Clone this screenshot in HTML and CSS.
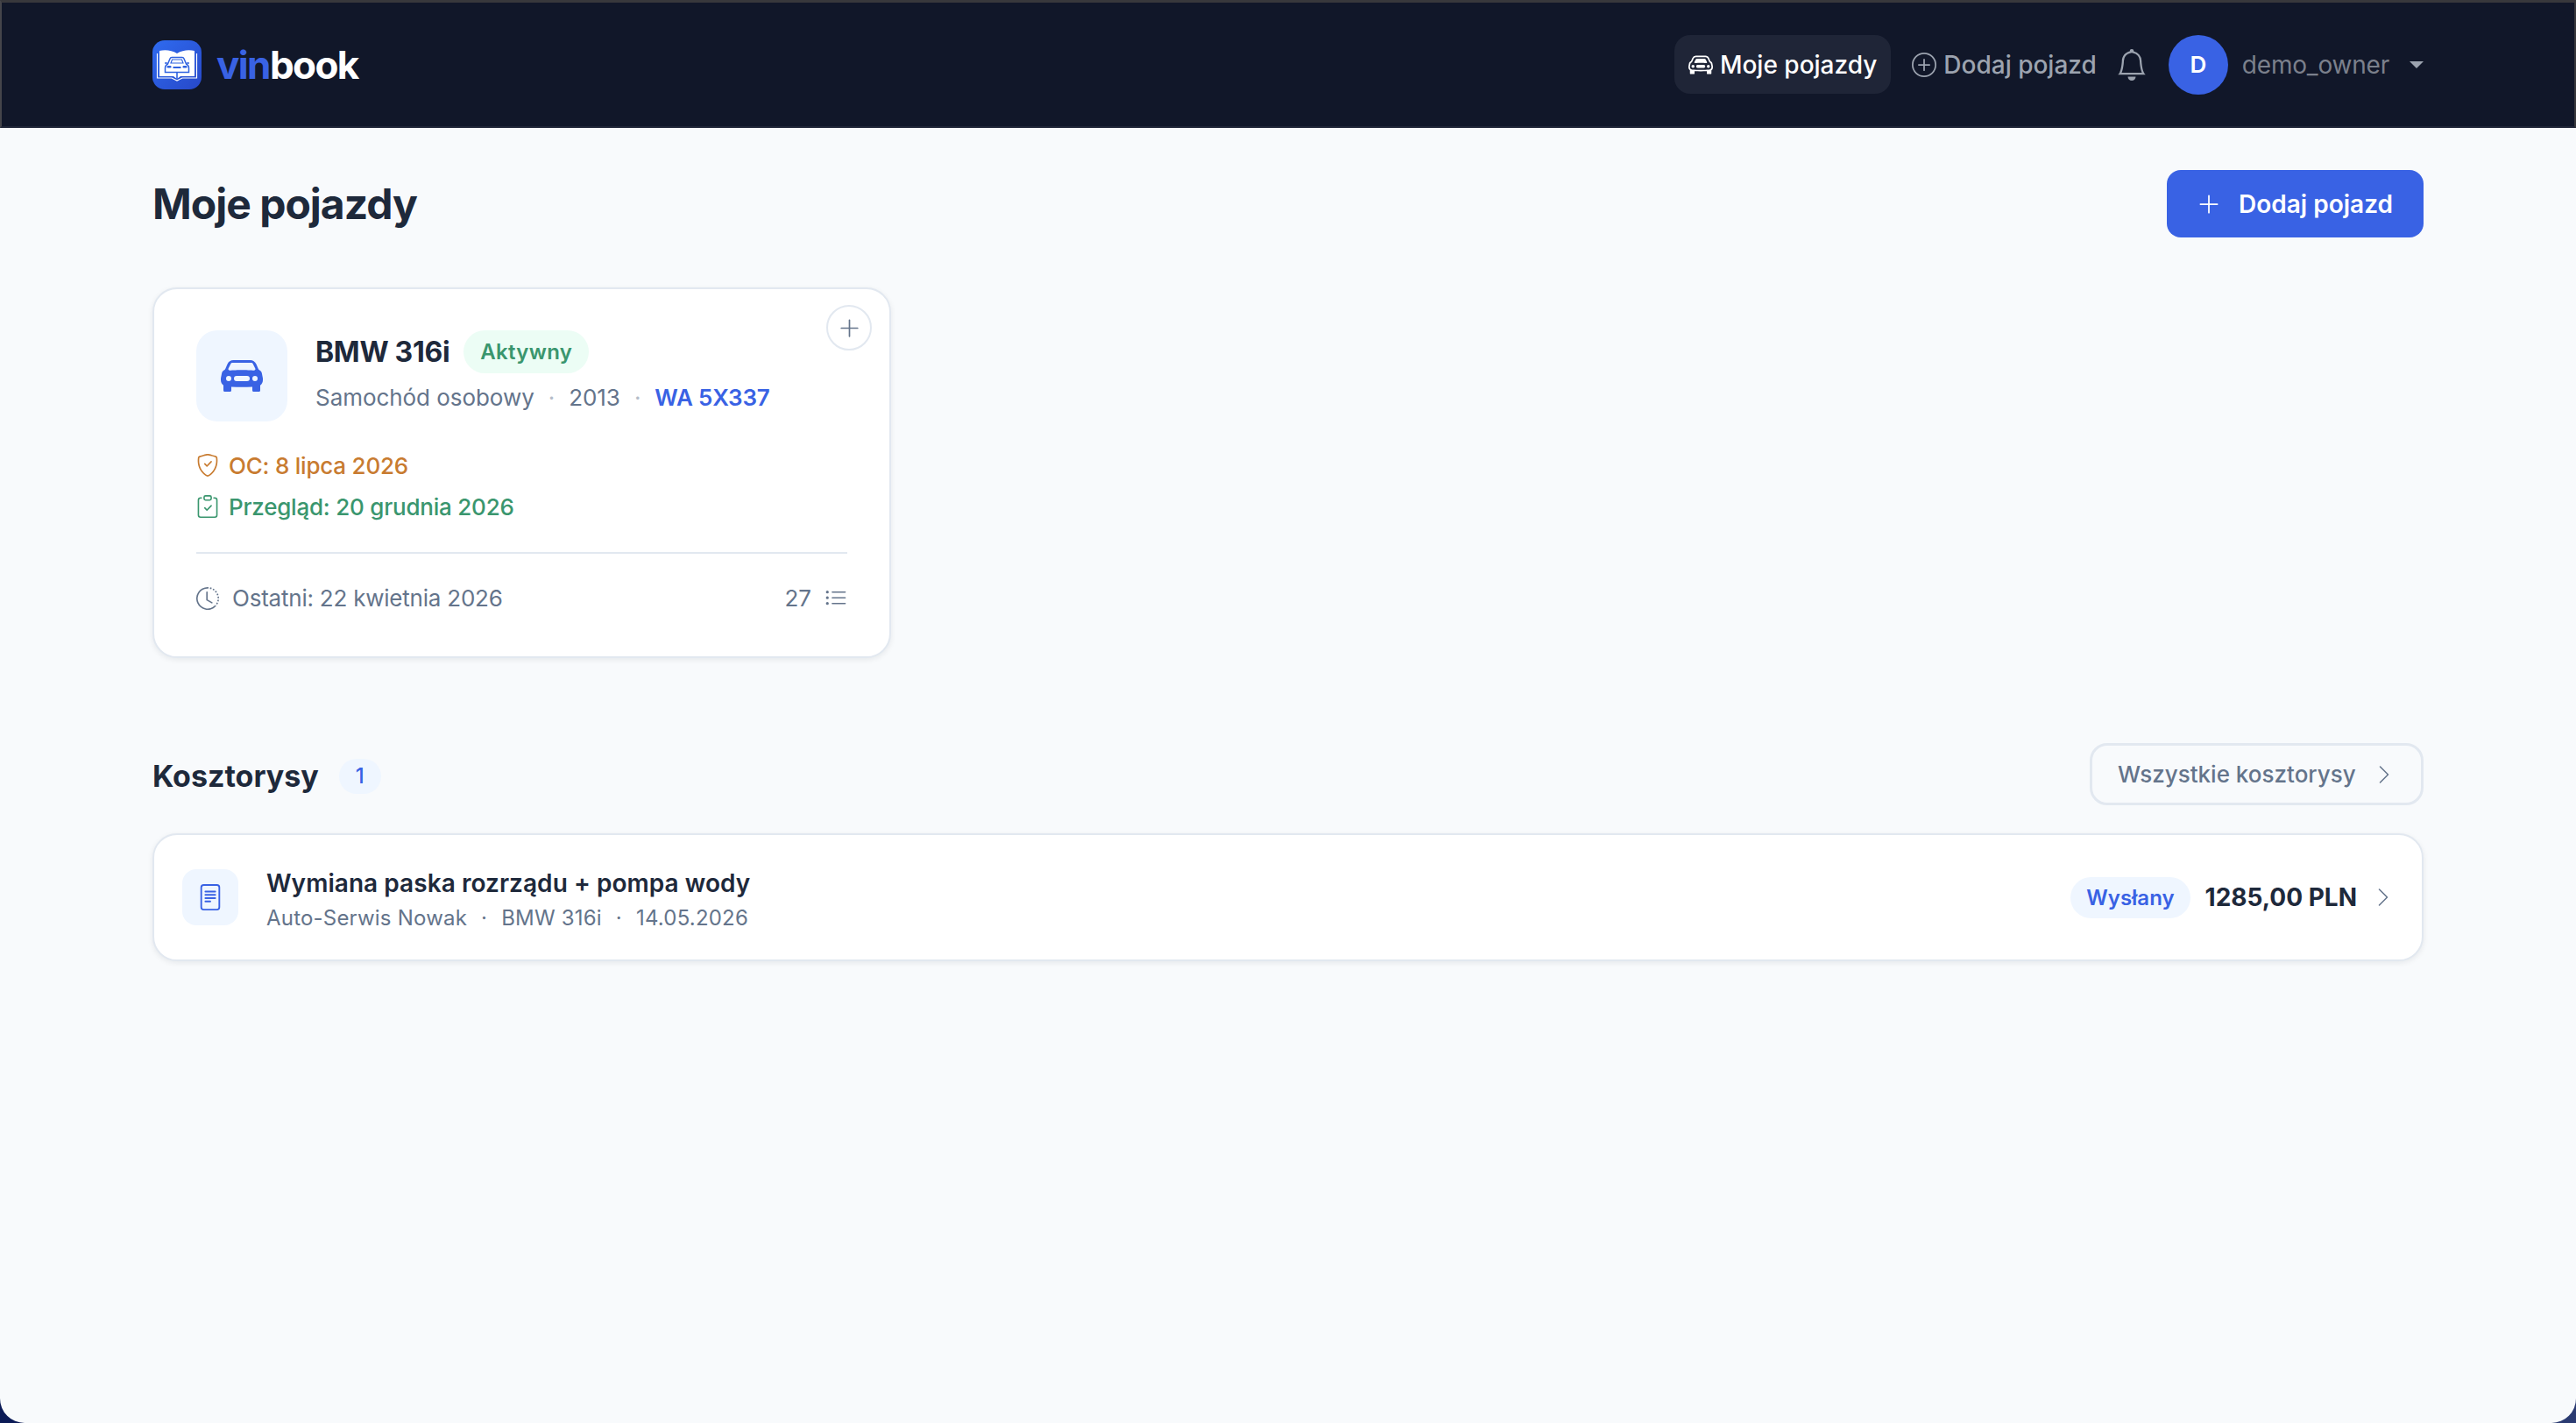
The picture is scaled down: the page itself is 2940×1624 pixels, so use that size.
FILE: index.html
```html
<!DOCTYPE html>
<html lang="pl">
<head>
    <meta charset="UTF-8">
    <title>vinbook - Moje pojazdy</title>
    <link rel="stylesheet" href="styles.css">
</head>
<body>

<div class="window">
    <header class="topbar">
        <a class="brand">
            <span class="brand-logo">
                <svg viewBox="0 0 56 56" width="56" height="56">
                    <path d="M8 12c6-1.500 14-1 20 3 6-4 14-4.500 20-3v29H32l-4 3-4-3H8z" fill="#fff"/>
                    <path d="M5.500 15v28H22l6 3 6-3h16.500V15" fill="none" stroke="#fff" stroke-width="1.200"/>
                    <path d="M28 36v8" stroke="#2f62e0" stroke-width="1.600"/>
                    <path d="M20 21c.4-1 1-1.500 2-1.500h12c1 0 1.600.5 2 1.500l2.500 6c2 1 3 2.500 3 4.500v5H14.500v-5c0-2 1-3.500 3-4.500z" fill="#fff" stroke="#2f62e0" stroke-width="1.500"/>
                    <path d="M21 26l1.500-4h11l1.500 4z" fill="none" stroke="#2f62e0" stroke-width="1.200"/>
                    <path d="M17 26h-3M39 26h3" stroke="#2f62e0" stroke-width="1.600"/>
                    <rect x="16.500" y="29" width="5" height="2.500" rx="1.200" fill="#2f62e0"/>
                    <rect x="34.500" y="29" width="5" height="2.500" rx="1.200" fill="#2f62e0"/>
                    <rect x="23.500" y="30" width="9" height="2" fill="#2f62e0"/>
                </svg>
            </span>
            <span class="brand-name"><span class="brand-vin">vin</span>book</span>
        </a>
        <nav class="topnav">
            <a class="nav-link active">
                <svg class="nav-icon" viewBox="0 0 16 16" fill="currentColor"><path d="M4 9a1 1 0 1 1-2 0 1 1 0 0 1 2 0m10 0a1 1 0 1 1-2 0 1 1 0 0 1 2 0M6 8a1 1 0 0 0 0 2h4a1 1 0 1 0 0-2zM4.862 4.276 3.906 6.190a.51.51 0 0 0 .497.731c.91-.073 2.350-.17 3.597-.17s2.688.097 3.597.17a.51.51 0 0 0 .497-.731l-.956-1.913A.5.5 0 0 0 10.691 4H5.309a.5.5 0 0 0-.447.276"/><path d="M2.520 3.515A2.500 2.500 0 0 1 4.820 2h6.362c1 0 1.904.596 2.298 1.515l.792 1.848c.075.175.21.319.38.404.5.25.855.715.965 1.262l.335 1.679q.05.242.049.49v.413c0 .814-.39 1.543-1 1.997V13.500a.5.5 0 0 1-.5.5h-2a.5.5 0 0 1-.5-.5v-1.338c-1.292.048-2.745.088-4 .088s-2.708-.04-4-.088V13.500a.5.5 0 0 1-.5.5h-2a.5.5 0 0 1-.5-.5v-1.892c-.61-.454-1-1.183-1-1.997v-.413a2.500 2.500 0 0 1 .049-.49l.335-1.680c.11-.546.465-1.012.964-1.261a.8.8 0 0 0 .381-.404l.792-1.848ZM4.820 3a1.500 1.500 0 0 0-1.379.91l-.792 1.847a1.800 1.800 0 0 1-.853.904.8.8 0 0 0-.43.564L1.030 8.910a1.500 1.500 0 0 0-.03.294v.413c0 .796.620 1.448 1.408 1.484 1.555.07 3.786.155 5.592.155s4.037-.084 5.592-.155A1.480 1.480 0 0 0 15 9.611v-.413q0-.148-.030-.294l-.335-1.680a.8.8 0 0 0-.430-.563 1.810 1.810 0 0 1-.853-.904l-.792-1.848A1.500 1.500 0 0 0 11.180 3z"/></svg>
                Moje pojazdy
            </a>
            <a class="nav-link">
                <svg class="nav-icon" viewBox="0 0 16 16" fill="currentColor"><path d="M8 15A7 7 0 1 1 8 1a7 7 0 0 1 0 14m0 1A8 8 0 1 0 8 0a8 8 0 0 0 0 16"/><path d="M8 4a.5.5 0 0 1 .5.5v3h3a.5.5 0 0 1 0 1h-3v3a.5.5 0 0 1-1 0v-3h-3a.5.5 0 0 1 0-1h3v-3A.5.5 0 0 1 8 4"/></svg>
                Dodaj pojazd
            </a>
            <svg class="bell" viewBox="0 0 16 16" fill="currentColor"><path d="M8 16a2 2 0 0 0 2-2H6a2 2 0 0 0 2 2M8 1.918l-.797.161A4 4 0 0 0 4 6c0 .628-.134 2.197-.459 3.742-.16.767-.376 1.566-.663 2.258h10.244c-.287-.692-.502-1.490-.663-2.258C12.134 8.197 12 6.628 12 6a4 4 0 0 0-3.203-3.920zM14.220 12c.223.447.481.801.78 1H1c.299-.199.557-.553.78-1C2.680 10.200 3 6.880 3 6c0-2.420 1.720-4.440 4.005-4.901a1 1 0 1 1 1.990 0A5 5 0 0 1 13 6c0 .88.32 4.200 1.220 6"/></svg>
            <span class="avatar">D</span>
            <span class="username">demo_owner</span>
            <span class="caret"></span>
        </nav>
    </header>

    <main class="content">
        <div class="page-head">
            <h1>Moje pojazdy</h1>
            <a class="btn-primary">
                <svg class="btn-plus" viewBox="0 0 16 16" fill="currentColor"><path fill-rule="evenodd" d="M8 2a.5.5 0 0 1 .5.5v5h5a.5.5 0 0 1 0 1h-5v5a.5.5 0 0 1-1 0v-5h-5a.5.5 0 0 1 0-1h5v-5A.5.5 0 0 1 8 2"/></svg>
                Dodaj pojazd
            </a>
        </div>

        <div class="vehicle-grid">
            <article class="vehicle-card">
                <button class="quick-add">
                    <svg viewBox="0 0 16 16" width="27" height="27" fill="currentColor"><path fill-rule="evenodd" d="M8 2a.5.5 0 0 1 .5.5v5h5a.5.5 0 0 1 0 1h-5v5a.5.5 0 0 1-1 0v-5h-5a.5.5 0 0 1 0-1h5v-5A.5.5 0 0 1 8 2"/></svg>
                </button>
                <div class="vehicle-head">
                    <div class="vehicle-icon">
                        <svg viewBox="0 0 16 16" width="48" height="48" fill="#3962e4"><path d="M2.520 3.515A2.500 2.500 0 0 1 4.820 2h6.362c1 0 1.904.596 2.298 1.515l.792 1.848c.075.175.21.319.38.404.5.25.855.715.965 1.262l.335 1.679q.05.242.049.49v.413c0 .814-.39 1.543-1 1.997V13.500a.5.5 0 0 1-.5.5h-2a.5.5 0 0 1-.5-.5v-1.338c-1.292.048-2.745.088-4 .088s-2.708-.04-4-.088V13.500a.5.5 0 0 1-.5.5h-2a.5.5 0 0 1-.5-.5v-1.892c-.61-.454-1-1.183-1-1.997v-.413a2.500 2.500 0 0 1 .049-.49l.335-1.680c.11-.546.465-1.012.964-1.261a.8.8 0 0 0 .381-.404l.792-1.848ZM3 10a1 1 0 1 0 0-2 1 1 0 0 0 0 2m10 0a1 1 0 1 0 0-2 1 1 0 0 0 0 2M6 8a1 1 0 0 0 0 2h4a1 1 0 1 0 0-2zM2.906 5.189a.51.51 0 0 0 .497.731c.91-.073 3.350-.17 4.597-.17s3.688.097 4.597.17a.51.510 0 0 0 .497-.731l-.956-1.913A.5.5 0 0 0 11.691 3H4.309a.5.5 0 0 0-.447.276L2.906 5.190Z"/></svg>
                    </div>
                    <div class="vehicle-info">
                        <div class="vehicle-title">
                            <span class="vehicle-name">BMW 316i</span>
                            <span class="badge badge-green">Aktywny</span>
                        </div>
                        <div class="vehicle-meta">
                            <span>Samochód osobowy</span>
                            <span class="dot">·</span>
                            <span>2013</span>
                            <span class="dot">·</span>
                            <span class="plate">WA 5X337</span>
                        </div>
                    </div>
                </div>

                <div class="vehicle-dates">
                    <div class="date-row orange">
                        <svg viewBox="0 0 16 16" width="26" height="26" fill="currentColor"><path d="M5.338 1.590a61 61 0 0 0-2.837.856.48.48 0 0 0-.328.39c-.554 4.157.726 7.190 2.253 9.188a10.700 10.700 0 0 0 2.287 2.233c.346.244.652.42.893.533q.18.085.293.118a1 1 0 0 0 .101.025 1 1 0 0 0 .1-.025q.114-.034.294-.118c.24-.113.547-.29.893-.533a10.700 10.700 0 0 0 2.287-2.233c1.527-1.997 2.807-5.031 2.253-9.188a.48.48 0 0 0-.328-.39c-.651-.213-1.750-.56-2.837-.855C9.552 1.290 8.531 1.067 8 1.067c-.53 0-1.552.223-2.662.524zM5.072.56C6.157.265 7.310 0 8 0s1.843.265 2.928.56c1.110.3 2.229.655 2.887.87a1.540 1.540 0 0 1 1.044 1.262c.596 4.477-.787 7.795-2.465 9.990a11.800 11.800 0 0 1-2.517 2.453 7 7 0 0 1-1.048.625c-.28.132-.581.24-.829.24s-.548-.108-.829-.24a7 7 0 0 1-1.048-.625 11.800 11.800 0 0 1-2.517-2.453C1.928 10.487.545 7.169 1.141 2.692A1.540 1.540 0 0 1 2.185 1.430 63 63 0 0 1 5.072.56"/><path d="M10.854 5.146a.5.5 0 0 1 0 .708l-3 3a.5.5 0 0 1-.708 0l-1.500-1.500a.5.5 0 1 1 .708-.708L7.500 7.793l2.646-2.647a.5.5 0 0 1 .708 0"/></svg>
                        OC: 8 lipca 2026
                    </div>
                    <div class="date-row green">
                        <svg viewBox="0 0 16 16" width="26" height="26" fill="currentColor"><path fill-rule="evenodd" d="M10.854 7.146a.5.5 0 0 1 0 .708l-3 3a.5.5 0 0 1-.708 0l-1.500-1.500a.5.5 0 1 1 .708-.708L7.500 9.793l2.646-2.647a.5.5 0 0 1 .708 0"/><path d="M4 1.500H3a2 2 0 0 0-2 2V14a2 2 0 0 0 2 2h10a2 2 0 0 0 2-2V3.500a2 2 0 0 0-2-2h-1v1h1a1 1 0 0 1 1 1V14a1 1 0 0 1-1 1H3a1 1 0 0 1-1-1V3.500a1 1 0 0 1 1-1h1z"/><path d="M9.500 1a.5.5 0 0 1 .5.5v1a.5.5 0 0 1-.5.5h-3a.5.5 0 0 1-.5-.5v-1a.5.5 0 0 1 .5-.5zm-3-1A1.500 1.500 0 0 0 5 1.500v1A1.500 1.500 0 0 0 6.500 4h3A1.500 1.500 0 0 0 11 2.500v-1A1.500 1.500 0 0 0 9.500 0z"/></svg>
                        Przegląd: 20 grudnia 2026
                    </div>
                </div>

                <div class="vehicle-foot">
                    <div class="last-entry">
                        <svg viewBox="0 0 16 16" width="26" height="26" fill="currentColor"><path d="M8.515 1.019A7 7 0 0 0 8 1V0a8 8 0 0 1 .589.022zm2.004.45a7 7 0 0 0-.985-.299l.219-.976q.576.129 1.126.342zm1.370.71a7 7 0 0 0-.439-.27l.493-.87a8 8 0 0 1 .979.654l-.615.789a7 7 0 0 0-.418-.302zm1.834 1.790a7 7 0 0 0-.653-.796l.724-.69q.406.429.747.91zm.744 1.352a7 7 0 0 0-.214-.468l.893-.45a8 8 0 0 1 .45 1.088l-.95.313a7 7 0 0 0-.179-.483m.53 2.507a7 7 0 0 0-.1-1.025l.985-.17q.1.58.116 1.170zm-.131 1.538q.05-.254.081-.51l.993.123a8 8 0 0 1-.23 1.155l-.964-.267q.069-.247.12-.501m-.952 2.379q.276-.436.486-.908l.914.405q-.24.54-.555 1.038zm-.964 1.205q.183-.183.35-.378l.758.653a8 8 0 0 1-.401.432z"/><path d="M8 1a7 7 0 1 0 4.950 11.950l.707.707A8.001 8.001 0 1 1 8 0z"/><path d="M7.500 3a.5.5 0 0 1 .5.5v5.210l3.248 1.856a.5.5 0 0 1-.496.868l-3.500-2A.5.5 0 0 1 7 9V3.500a.5.5 0 0 1 .5-.5"/></svg>
                        Ostatni: 22 kwietnia 2026
                    </div>
                    <div class="entry-count">
                        27
                        <svg viewBox="0 0 16 16" width="26" height="26" fill="currentColor"><path fill-rule="evenodd" d="M5 11.500a.5.5 0 0 1 .5-.5h9a.5.5 0 0 1 0 1h-9a.5.5 0 0 1-.5-.5m0-4a.5.5 0 0 1 .5-.5h9a.5.5 0 0 1 0 1h-9a.5.5 0 0 1-.5-.5m0-4a.5.5 0 0 1 .5-.5h9a.5.5 0 0 1 0 1h-9a.5.5 0 0 1-.5-.5m-3 1a1 1 0 1 0 0-2 1 1 0 0 0 0 2m0 4a1 1 0 1 0 0-2 1 1 0 0 0 0 2m0 4a1 1 0 1 0 0-2 1 1 0 0 0 0 2"/></svg>
                    </div>
                </div>
            </article>
        </div>

        <section class="estimates">
            <div class="section-head">
                <div class="section-title">
                    <h2>Kosztorysy</h2>
                    <span class="count">1</span>
                </div>
                <a class="btn-outline">
                    Wszystkie kosztorysy
                    <svg class="chevron" viewBox="0 0 16 16" fill="currentColor"><path fill-rule="evenodd" d="M4.646 1.646a.5.5 0 0 1 .708 0l6 6a.5.5 0 0 1 0 .708l-6 6a.5.5 0 0 1-.708-.708L10.293 8 4.646 2.354a.5.5 0 0 1 0-.708"/></svg>
                </a>
            </div>

            <div class="estimate-row">
                <div class="estimate-icon">
                    <svg viewBox="0 0 16 16" width="30" height="30" fill="#3962e4"><path d="M5 4a.5.5 0 0 0 0 1h6a.5.5 0 0 0 0-1zm-.5 2.500A.5.5 0 0 1 5 6h6a.5.5 0 0 1 0 1H5a.5.5 0 0 1-.5-.5M5 8a.5.5 0 0 0 0 1h6a.5.5 0 0 0 0-1zm0 2a.5.5 0 0 0 0 1h3a.5.5 0 0 0 0-1z"/><path d="M2 2a2 2 0 0 1 2-2h8a2 2 0 0 1 2 2v12a2 2 0 0 1-2 2H4a2 2 0 0 1-2-2zm10-1H4a1 1 0 0 0-1 1v12a1 1 0 0 0 1 1h8a1 1 0 0 0 1-1V2a1 1 0 0 0-1-1"/></svg>
                </div>
                <div class="estimate-info">
                    <div class="estimate-title">Wymiana paska rozrządu + pompa wody</div>
                    <div class="estimate-meta">
                        <span>Auto-Serwis Nowak</span>
                        <span>·</span>
                        <span>BMW 316i</span>
                        <span>·</span>
                        <span>14.05.2026</span>
                    </div>
                </div>
                <span class="badge badge-blue">Wysłany</span>
                <span class="estimate-price">1285,00 PLN</span>
                <svg class="chevron" viewBox="0 0 16 16" fill="currentColor"><path fill-rule="evenodd" d="M4.646 1.646a.5.5 0 0 1 .708 0l6 6a.5.5 0 0 1 0 .708l-6 6a.5.5 0 0 1-.708-.708L10.293 8 4.646 2.354a.5.5 0 0 1 0-.708"/></svg>
            </div>
        </section>
    </main>
</div>

</body>
</html>
```

FILE: styles.css
```css
* {
    box-sizing: border-box;
}
html, body {
    margin: 0;
    height: 100%;
}
body {
    background: linear-gradient(to right, #0b1a56, #2b3b72);
    font-family: Inter, "Noto Sans", sans-serif;
    color: #1e293b;
}
.window {
    height: 100%;
    background-color: #f8fafc;
    border-radius: 0 0 28px 28px;
    overflow: hidden;
}
.topbar {
    height: 146px;
    background-color: #111729;
    border-top: 3px solid #38383c;
    border-left: 2px solid #45454a;
    border-right: 2px solid #38383c;
    border-bottom: 2px solid #1f2537;
    padding: 0 172px;
    display: flex;
    align-items: center;
    justify-content: space-between;
}
.brand {
    display: flex;
    align-items: center;
    gap: 17px;
}
.brand-logo {
    width: 56px;
    height: 56px;
    border-radius: 14px;
    background: linear-gradient(135deg, #2f6bf0, #2748c8);
    display: block;
}
.brand-logo svg {
    display: block;
}
.brand-name {
    font-size: 44px;
    font-weight: 700;
    letter-spacing: -1.6px;
    color: #fff;
}
.brand-vin {
    color: #3962e4;
}
.topnav {
    display: flex;
    align-items: center;
}
.nav-link {
    height: 67px;
    padding: 0 16px;
    border-radius: 18px;
    display: flex;
    align-items: center;
    gap: 8px;
    font-size: 28px;
    font-weight: 500;
    color: #9ca3af;
}
.nav-link.active {
    background-color: #1f2537;
    color: #fff;
    margin-right: 8px;
}
.nav-icon {
    width: 28px;
    height: 28px;
}
.bell {
    width: 36px;
    height: 36px;
    color: #9ca3af;
    margin: 0 24px 0 6px;
}
.avatar {
    width: 68px;
    height: 68px;
    border-radius: 50%;
    background-color: #3962e4;
    color: #fff;
    font-size: 26px;
    font-weight: 600;
    display: flex;
    align-items: center;
    justify-content: center;
}
.username {
    margin-left: 16px;
    font-size: 28px;
    letter-spacing: -0.2px;
    color: #7b808c;
}
.caret {
    margin-left: 23px;
    border-top: 8px solid #9ca3af;
    border-left: 8.500px solid transparent;
    border-right: 8.500px solid transparent;
}
.content {
    padding: 48px 174px;
}
.page-head {
    display: flex;
    align-items: center;
    justify-content: space-between;
    margin-bottom: 57px;
}
h1 {
    margin: 0;
    font-size: 48px;
    font-weight: 700;
    letter-spacing: -1px;
    color: #1e293b;
}
.btn-primary {
    height: 77px;
    width: 293px;
    padding-left: 34px;
    border-radius: 16px;
    background-color: #3962e4;
    color: #fff;
    font-size: 28px;
    font-weight: 600;
    display: flex;
    align-items: center;
    gap: 20px;
}
.btn-plus {
    width: 28px;
    height: 28px;
}
.vehicle-grid {
    display: grid;
    grid-template-columns: 843px;
}
.vehicle-card {
    position: relative;
    height: 423px;
    padding: 47px 48px;
    background-color: #fff;
    border: 2px solid #e2e8f0;
    border-radius: 28px;
    box-shadow: 0 2px 6px rgba(15, 23, 42, 0.08);
}
.quick-add {
    position: absolute;
    top: 18px;
    right: 20px;
    width: 52px;
    height: 52px;
    padding: 0;
    border: 2px solid #e2e8f0;
    border-radius: 50%;
    background-color: #fff;
    color: #64748b;
    display: flex;
    align-items: center;
    justify-content: center;
}
.vehicle-head {
    display: flex;
    gap: 32px;
}
.vehicle-icon {
    width: 104px;
    height: 104px;
    border-radius: 24px;
    background-color: #eff6ff;
    display: flex;
    align-items: center;
    justify-content: center;
}
.vehicle-title {
    display: flex;
    align-items: center;
    gap: 16px;
}
.vehicle-name {
    font-size: 32px;
    font-weight: 700;
    letter-spacing: -0.3px;
}
.badge {
    border-radius: 999px;
    font-weight: 600;
    display: flex;
    align-items: center;
}
.badge-green {
    height: 49px;
    padding: 0 19px;
    background-color: #ecfdf5;
    color: #3a966e;
    font-size: 24px;
    letter-spacing: 0.3px;
}
.badge-blue {
    height: 47px;
    padding: 0 18px;
    background-color: #eff6ff;
    color: #3962e4;
    font-size: 24px;
}
.vehicle-meta {
    margin-top: 10px;
    line-height: 36px;
    display: flex;
    align-items: center;
    gap: 16px;
    font-size: 26px;
    letter-spacing: -0.05px;
    color: #64748b;
}
.dot {
    color: #b4bcc8;
}
.plate {
    font-weight: 600;
    letter-spacing: -0.2px;
    color: #3962e4;
}
.vehicle-dates {
    margin-top: 33px;
    display: flex;
    flex-direction: column;
    gap: 13px;
}
.date-row {
    height: 34px;
    display: flex;
    align-items: center;
    gap: 11px;
    font-size: 26px;
    font-weight: 500;
    letter-spacing: -0.22px;
}
.orange {
    color: #c87b30;
}
.green {
    color: #3a966e;
}
.vehicle-foot {
    margin-top: 35px;
    padding-top: 35px;
    line-height: 32px;
    border-top: 2px solid #e2e8f0;
    display: flex;
    align-items: center;
    justify-content: space-between;
    font-size: 26px;
    color: #64748b;
}
.last-entry, .entry-count {
    display: flex;
    align-items: center;
    gap: 15px;
}
.last-entry {
    letter-spacing: -0.22px;
}
.section-head {
    margin-top: 97px;
    display: flex;
    align-items: center;
    justify-content: space-between;
}
.section-title {
    padding-top: 4px;
    display: flex;
    align-items: center;
    gap: 23px;
}
h2 {
    margin: 0;
    font-size: 34px;
    font-weight: 700;
    color: #1e293b;
}
.count {
    width: 48px;
    height: 40px;
    border-radius: 20px;
    background-color: #eff6ff;
    color: #3962e4;
    font-size: 24px;
    font-weight: 500;
    display: flex;
    align-items: center;
    justify-content: center;
}
.btn-outline {
    height: 71px;
    width: 381px;
    padding-left: 29px;
    border: 3px solid #e2e8f0;
    border-radius: 20px;
    display: flex;
    align-items: center;
    gap: 20px;
    font-size: 26px;
    font-weight: 500;
    color: #64748b;
}
.chevron {
    width: 24px;
    height: 24px;
    color: #64748b;
}
.estimate-row {
    margin-top: 32px;
    height: 146px;
    padding: 0 32px;
    background-color: #fff;
    border: 2px solid #e2e8f0;
    border-radius: 28px;
    box-shadow: 0 2px 6px rgba(15, 23, 42, 0.08);
    display: flex;
    align-items: center;
}
.estimate-icon {
    width: 64px;
    height: 64px;
    border-radius: 16px;
    background-color: #eff6ff;
    display: flex;
    align-items: center;
    justify-content: center;
}
.estimate-info {
    margin-left: 32px;
    padding-top: 3px;
    flex: 1;
}
.estimate-title {
    font-size: 28px;
    line-height: 40px;
    font-weight: 600;
    letter-spacing: 0.05px;
}
.estimate-meta {
    margin-top: 4px;
    line-height: 32px;
    display: flex;
    gap: 16px;
    font-size: 24px;
    letter-spacing: 0.2px;
    color: #64748b;
}
.estimate-price {
    margin: 0 18px 0 17px;
    font-size: 28px;
    font-weight: 700;
}
```
